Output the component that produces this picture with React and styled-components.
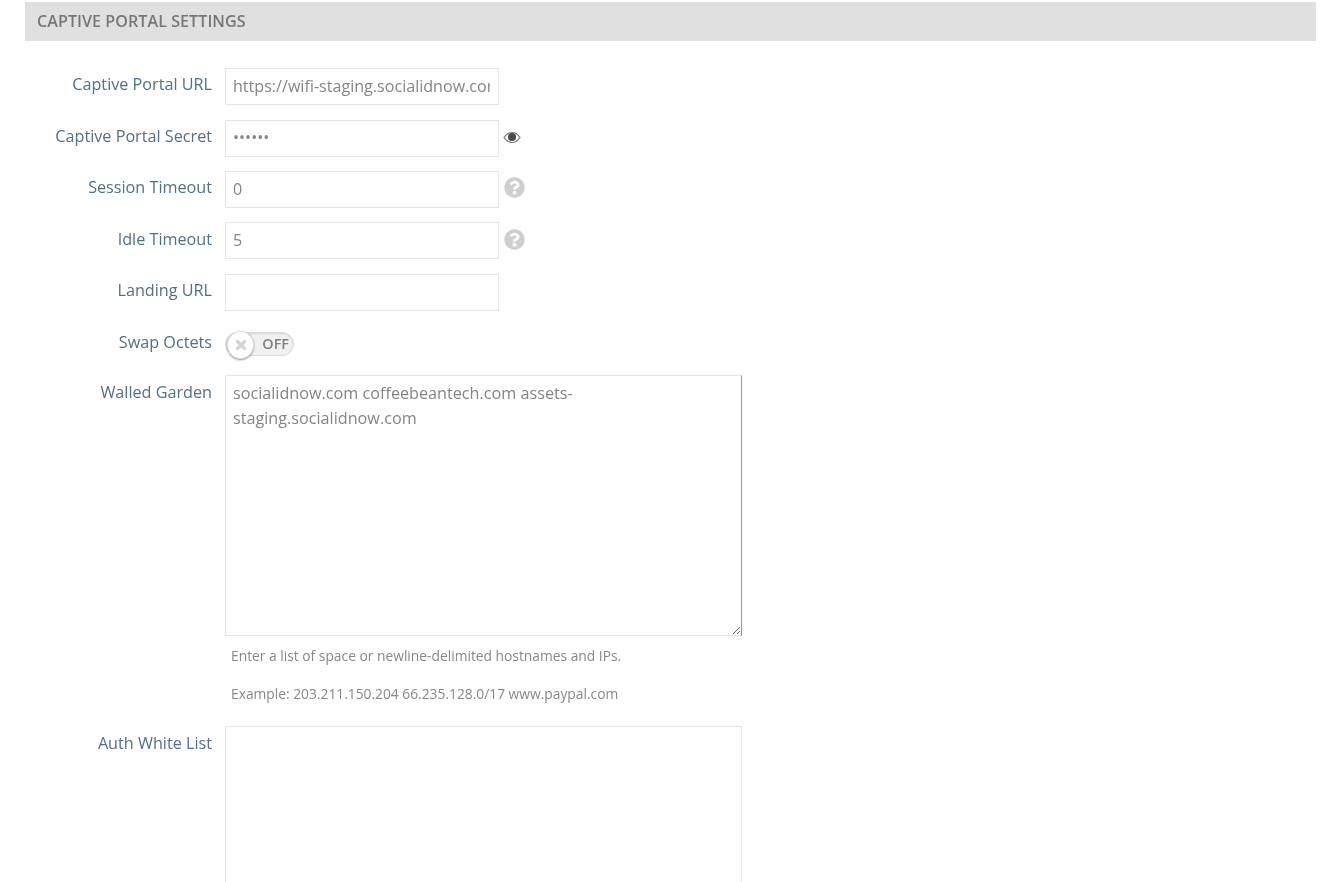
import React from "react";
import styled, { createGlobalStyle } from "styled-components";
import { FaQuestionCircle } from "react-icons/fa";

const Global = createGlobalStyle`
  html, body { margin: 0; padding: 0; background: #fff; overflow: hidden; height: 100%; }
  body { font-family: "Open Sans", "Liberation Sans", sans-serif; }
  * { box-sizing: border-box; }
`;

const Page = styled.div`
  padding: 2px 23px 0 25px;
  filter: blur(0.45px);
`;

const SectionHeader = styled.h2`
  margin: 0;
  height: 39px;
  padding-left: 12px;
  background: #e0e0e0;
  color: #777;
  font-size: 16.1px;
  font-weight: 600;
  line-height: 38px;
  text-transform: uppercase;
  letter-spacing: 0.05px;
`;

const Form = styled.form`
  display: flex;
  flex-direction: column;
  padding-top: 27.2px;
`;

const Row = styled.div`
  display: grid;
  grid-template-columns: 187px auto;
  column-gap: 13px;
  align-items: start;
  justify-content: start;
  margin-bottom: ${(p) => p.$gap ?? 14.4}px;
`;

const Label = styled.label`
  color: #537084;
  font-size: 16.2px;
  line-height: 20px;
  text-align: right;
  padding-top: ${(p) => p.$top ?? 6}px;
`;

const Control = styled.div`
  display: flex;
  align-items: center;
`;

const TextInput = styled.input`
  width: 274px;
  height: 37px;
  padding: 0 8px ${(p) => p.$up ?? 2}px 7px;
  border: 1px solid #e6e6e6;
  border-radius: 0;
  outline: none;
  background: #fff;
  color: #858585;
  font-family: inherit;
  font-size: 16.1px;
`;

const Hint = styled.span`
  display: flex;
  margin-left: ${(p) => p.$left}px;
  margin-bottom: ${(p) => p.$lift}px;
  color: ${(p) => p.$color};
  font-size: ${(p) => p.$size}px;
`;

const Toggle = styled.div`
  position: relative;
  display: flex;
  align-items: center;
  justify-content: flex-end;
  width: 69px;
  height: 24px;
  margin-top: 8px;
  padding-right: 4px;
  border: 1px solid #d9d9d9;
  border-radius: 12px;
  background: #f1f1f1;
  box-shadow: inset 0 1px 2px rgba(0, 0, 0, 0.12);
  color: #808080;
  font-size: 14.4px;
  font-weight: 600;
`;

const Knob = styled.span`
  position: absolute;
  left: 1px;
  top: -2px;
  display: flex;
  align-items: center;
  justify-content: center;
  width: 27px;
  height: 28px;
  border: 1px solid #ddd;
  border-radius: 50%;
  background: #fff;
  box-shadow: 0 1px 2px rgba(0, 0, 0, 0.4);
`;

const TextArea = styled.textarea`
  display: block;
  width: 517px;
  height: ${(p) => p.$height}px;
  padding: 5px 7px;
  border: 1px solid #e6e6e6;
  border-right-color: ${(p) => p.$edge ?? "#e6e6e6"};
  border-radius: 0;
  outline: none;
  background: #fff;
  color: #858585;
  font-family: inherit;
  font-size: 16.2px;
  line-height: 25px;
`;

const Column = styled.div`
  display: flex;
  flex-direction: column;
`;

const HelpText = styled.p`
  margin: ${(p) => p.$top}px 0 0 6px;
  color: #888;
  font-size: 13.8px;
  line-height: 18px;
`;

const EyeIcon = () => (
  <svg width="18" height="13" viewBox="0 0 18 13" aria-hidden="true">
    <path d="M1 6.5C3.4 3 6 1.500 9 1.500s5.600 1.500 8 5c-2.400 3.500-5 5-8 5s-5.600-1.500-8-5z" fill="#fff" stroke="#777" strokeWidth="1.200" />
    <circle cx="9" cy="6" r="4" fill="#4a4a4a" />
  </svg>
);

const CrossIcon = () => (
  <svg width="12" height="12" viewBox="0 0 12 12" aria-hidden="true">
    <path d="M2.500 2.500l7 7M9.500 2.500l-7 7" fill="none" stroke="#d6d6d6" strokeWidth="3.400" strokeLinecap="round" />
  </svg>
);

export default function App() {
  return (
    <Page>
      <Global />
      <SectionHeader>Captive Portal Settings</SectionHeader>
      <Form>
        <Row>
          <Label>Captive Portal URL</Label>
          <Control>
            <TextInput readOnly value="https://wifi-staging.socialidnow.com/login" />
          </Control>
        </Row>
        <Row>
          <Label>Captive Portal Secret</Label>
          <Control>
            <TextInput readOnly type="password" value="secret" />
            <Hint $left={4} $lift={2} $color="#555" $size={17}><EyeIcon /></Hint>
          </Control>
        </Row>
        <Row>
          <Label>Session Timeout</Label>
          <Control>
            <TextInput readOnly value="0" $up={0} />
            <Hint $left={5} $lift={3} $color="#cfcfcf" $size={21}><FaQuestionCircle /></Hint>
          </Control>
        </Row>
        <Row>
          <Label $top={6.8}>Idle Timeout</Label>
          <Control>
            <TextInput readOnly value="5" $up={1} />
            <Hint $left={5} $lift={3} $color="#cfcfcf" $size={21}><FaQuestionCircle /></Hint>
          </Control>
        </Row>
        <Row $gap={13}>
          <Label>Landing URL</Label>
          <Control>
            <TextInput readOnly value="" />
          </Control>
        </Row>
        <Row $gap={19}>
          <Label $top={8}>Swap Octets</Label>
          <Control>
            <Toggle>
              <Knob><CrossIcon /></Knob>
              OFF
            </Toggle>
          </Control>
        </Row>
        <Row $gap={23}>
          <Label $top={7}>Walled Garden</Label>
          <Column>
            <TextArea readOnly $height={261} $edge="#9a9a9a" value="socialidnow.com coffeebeantech.com assets-staging.socialidnow.com" />
            <HelpText $top={11}>Enter a list of space or newline-delimited hostnames and IPs.</HelpText>
            <HelpText $top={20}>Example: 203.211.150.204 66.235.128.0/17 www.paypal.com</HelpText>
          </Column>
        </Row>
        <Row>
          <Label $top={7}>Auth White List</Label>
          <Column>
            <TextArea readOnly $height={262} value="" />
          </Column>
        </Row>
      </Form>
    </Page>
  );
}
